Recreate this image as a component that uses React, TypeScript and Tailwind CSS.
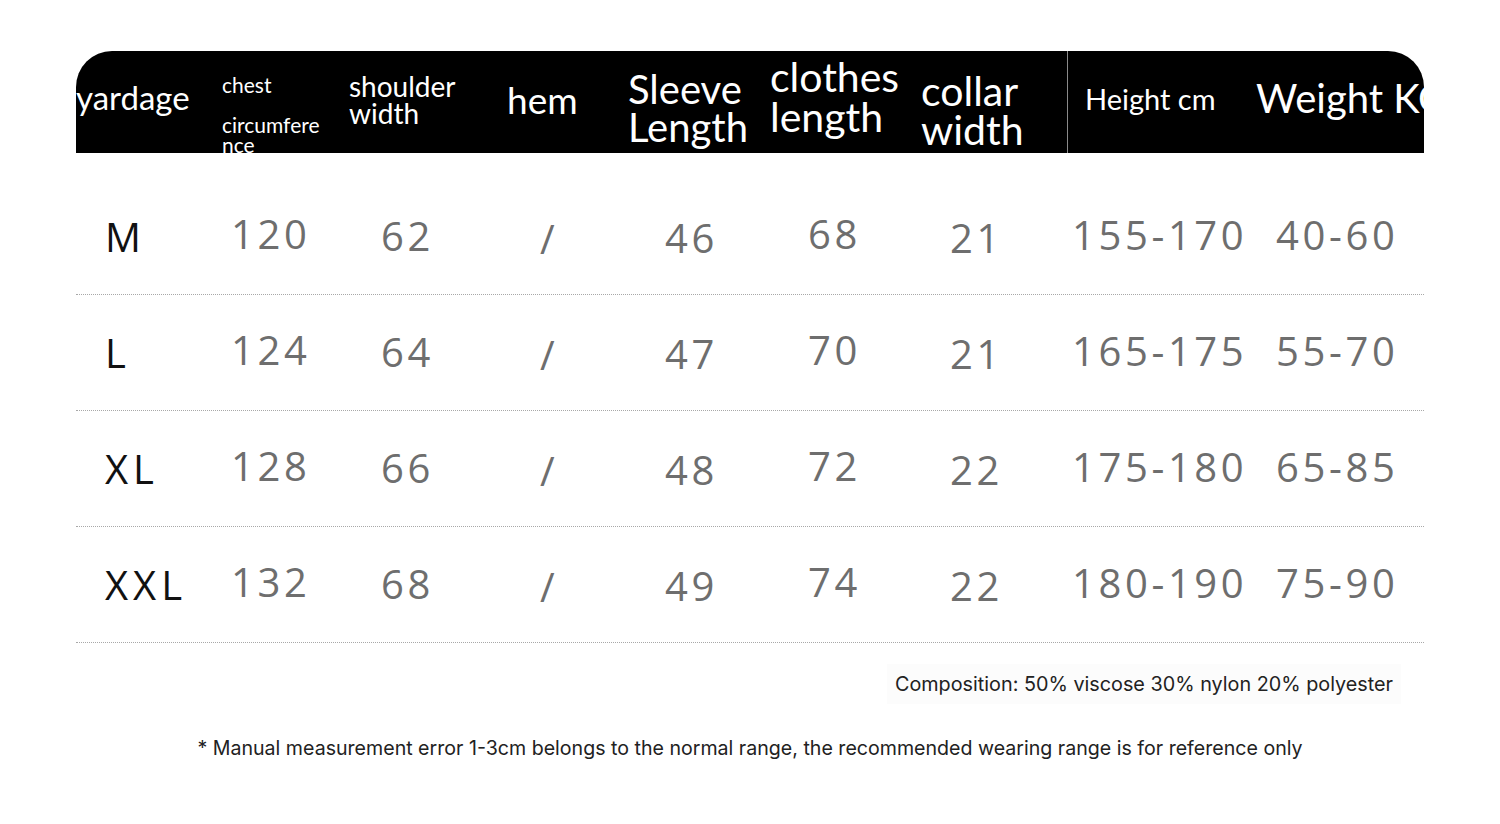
const headFont = { fontFamily: "Lato, 'Noto Sans', sans-serif" };

type Row = { size: string; vals: string[] };

const rows: Row[] = [
  { size: "M", vals: ["120", "62", "/", "46", "68", "21", "155-170", "40-60"] },
  { size: "L", vals: ["124", "64", "/", "47", "70", "21", "165-175", "55-70"] },
  { size: "XL", vals: ["128", "66", "/", "48", "72", "22", "175-180", "65-85"] },
  { size: "XXL", vals: ["132", "68", "/", "49", "74", "22", "180-190", "75-90"] },
];

// data column widths (px) and small per-column vertical nudges
const cols = [
  { w: "w-[150px]", nudge: "-mt-[6px]" },
  { w: "w-[159px]", nudge: "-mt-[2px]" },
  { w: "w-[125px]", nudge: "mt-[4px]" },
  { w: "w-[143px]", nudge: "mt-[2px]" },
  { w: "w-[142px]", nudge: "-mt-[6px]" },
  { w: "w-[122px]", nudge: "mt-[2px]" },
  { w: "w-[204px]", nudge: "-mt-[4px]" },
  { w: "flex-1", nudge: "-mt-[4px]" },
];

function Header() {
  return (
    <div
      className="flex h-[102px] overflow-hidden whitespace-nowrap rounded-t-[36px] bg-black text-white"
      style={headFont}
    >
      <div className="w-[146px] shrink-0 pt-[27px] text-[33px] leading-[38px]">yardage</div>
      <div className="w-[127px] shrink-0 pt-[24px] text-[21px] leading-[20px]">
        <div>chest</div>
        <div className="mt-[20px]">circumfere</div>
        <div>nce</div>
      </div>
      <div className="w-[158px] shrink-0 pt-[22px] text-[28px] leading-[27px]">
        <div>shoulder</div>
        <div>width</div>
      </div>
      <div className="w-[121px] shrink-0 pt-[29px] text-[37px] leading-[40px]">hem</div>
      <div className="w-[142px] shrink-0 pt-[19px] text-[40px] leading-[38px]">
        <div>Sleeve</div>
        <div>Length</div>
      </div>
      <div className="w-[151px] shrink-0 pt-[6px] text-[41px] leading-[40px]">
        <div>clothes</div>
        <div>length</div>
      </div>
      <div className="w-[147px] shrink-0 border-r border-[#8a8a8a] pt-[20px] text-[41px] leading-[39px]">
        <div>collar</div>
        <div>width</div>
      </div>
      <div className="w-[188px] shrink-0 pl-[17px] pt-[32px] text-[29px] leading-[32px]">Height cm</div>
      <div className="shrink-0 pt-[26px] text-[40px] leading-[42px]">Weight KG</div>
    </div>
  );
}

function DataRow({ row }: { row: Row }) {
  return (
    <div
      className="flex h-[116px] items-center border-b border-dotted border-[#a8a8a8]"
      style={{ fontFamily: "'Open Sans', 'Noto Sans', sans-serif" }}
    >
      <div className="w-[155px] shrink-0 pl-[29px] text-[40px] tracking-[5px] text-[#111]">{row.size}</div>
      {row.vals.map((v, i) => (
        <div
          key={i}
          className={`${cols[i].w} ${cols[i].nudge} shrink-0 text-[40px] tracking-[3.6px] text-[#6e6e6e]`}
        >
          {v}
        </div>
      ))}
    </div>
  );
}

export default function App() {
  return (
    <main className="h-[824px] w-[1500px] overflow-hidden bg-white">
      <div className="mx-[76px] pt-[51px]">
        <Header />
        <div className="pt-[26px]">
          {rows.map((r) => (
            <DataRow key={r.size} row={r} />
          ))}
        </div>
      </div>

      <div className="flex justify-end pr-[99px] pt-[21px]">
        <div
          className="bg-[#fcfcfc] px-[8px] py-[8px] text-[19.8px] leading-[24px] text-[#222]"
          style={{ fontFamily: "Inter, 'Noto Sans', sans-serif" }}
        >
          Composition: 50% viscose 30% nylon 20% polyester
        </div>
      </div>

      <div
        className="mt-[32px] text-center text-[19.6px] leading-[24px] text-[#222]"
        style={{ fontFamily: "Inter, 'Noto Sans', sans-serif" }}
      >
        * Manual measurement error 1-3cm belongs to the normal range, the recommended wearing range is for reference only
      </div>
    </main>
  );
}
